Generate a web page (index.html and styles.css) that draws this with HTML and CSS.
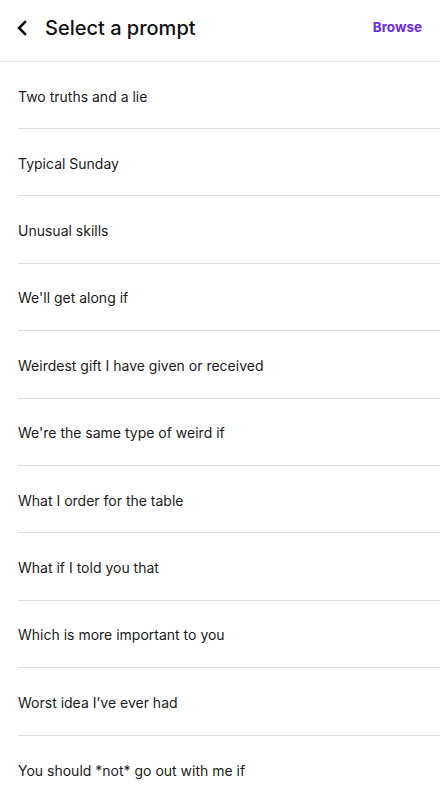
FILE: index.html
```html
<!DOCTYPE html>
<html lang="en">
<head>
<meta charset="utf-8">
<title>Select a prompt</title>
<link rel="stylesheet" href="styles.css">
</head>
<body>
<div class="screen">
  <header class="header">
    <div class="header-left">
      <svg class="back" width="12" height="16" viewBox="0 0 12 16" aria-hidden="true">
        <path d="M9 2 L3 8 L9 14" fill="none" stroke="#111" stroke-width="2.6" stroke-linecap="square" stroke-linejoin="miter"/>
      </svg>
      <h1 class="title">Select a prompt</h1>
    </div>
    <a class="browse">Browse</a>
  </header>
  <ul class="list">
    <li class="row">Two truths and a lie</li>
    <li class="row">Typical Sunday</li>
    <li class="row">Unusual skills</li>
    <li class="row">We'll get along if</li>
    <li class="row">Weirdest gift I have given or received</li>
    <li class="row">We're the same type of weird if</li>
    <li class="row">What I order for the table</li>
    <li class="row">What if I told you that</li>
    <li class="row">Which is more important to you</li>
    <li class="row">Worst idea I’ve ever had</li>
    <li class="row last">You should *not* go out with me if</li>
  </ul>
  <div class="navbar"></div>
</div>
</body>
</html>
```
FILE: styles.css
```css
* { box-sizing: border-box; }
html, body { margin: 0; padding: 0; background: #fff; }
body { font-family: Inter, "Noto Sans", sans-serif; color: #1b1b1b; }
.screen { width: 440px; height: 800px; display: flex; flex-direction: column; overflow: hidden; }
.header {
  height: 62px; flex: none;
  display: flex; align-items: center; justify-content: space-between;
  padding: 0 18px 6px 16px;
  border-bottom: 1px solid #e6e6e6;
}
.header-left { display: flex; align-items: center; gap: 17px; }
.back { display: block; }
.title { margin: 0; font-size: 20px; font-weight: 500; letter-spacing: 0; color: #111; }
.browse { font-size: 13.5px; font-weight: 700; color: #6a2be0; padding-bottom: 1px; }
.list { list-style: none; margin: 0; padding: 0 0 0 18px; flex: 1; }
.row {
  height: 67.4px;
  display: flex; align-items: center;
  padding-top: 2px;
  font-size: 14px; color: #1b1b1b;
  border-bottom: 1px solid #dedede;
}
.row:first-child { height: 67px; }
.row.last { border-bottom: none; }
.navbar { height: 5px; flex: none; background: #000; border-top: 1px solid #555; }
```
